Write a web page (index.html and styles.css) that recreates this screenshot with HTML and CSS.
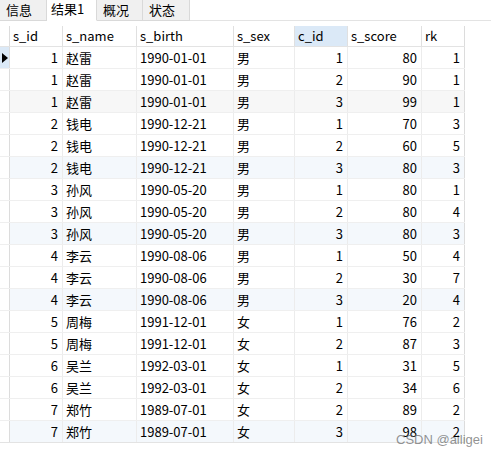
FILE: index.html
```html
<!DOCTYPE html>
<html>
<head>
<meta charset="utf-8">
<link rel="stylesheet" href="styles.css">
</head>
<body>
<div class="tabs">
  <div class="tab">信息</div>
  <div class="tab active">结果1</div>
  <div class="tab">概况</div>
  <div class="tab">状态</div>
  <div class="tab-fill"></div>
</div>
<div class="grid">
  <div class="row head">
    <div class="c ind"></div><div class="c">s_id</div><div class="c">s_name</div><div class="c">s_birth</div><div class="c">s_sex</div><div class="c sel">c_id</div><div class="c">s_score</div><div class="c">rk</div>
  </div>
  <div class="row"><div class="c ind cur"><span class="tri"></span></div><div class="c n">1</div><div class="c">赵雷</div><div class="c">1990-01-01</div><div class="c">男</div><div class="c n">1</div><div class="c n">80</div><div class="c n">1</div></div>
  <div class="row"><div class="c ind"></div><div class="c n">1</div><div class="c">赵雷</div><div class="c">1990-01-01</div><div class="c">男</div><div class="c n">2</div><div class="c n">90</div><div class="c n">1</div></div>
  <div class="row gray"><div class="c ind"></div><div class="c n">1</div><div class="c">赵雷</div><div class="c">1990-01-01</div><div class="c">男</div><div class="c n">3</div><div class="c n">99</div><div class="c n">1</div></div>
  <div class="row"><div class="c ind"></div><div class="c n">2</div><div class="c">钱电</div><div class="c">1990-12-21</div><div class="c">男</div><div class="c n">1</div><div class="c n">70</div><div class="c n">3</div></div>
  <div class="row"><div class="c ind"></div><div class="c n">2</div><div class="c">钱电</div><div class="c">1990-12-21</div><div class="c">男</div><div class="c n">2</div><div class="c n">60</div><div class="c n">5</div></div>
  <div class="row blue"><div class="c ind"></div><div class="c n">2</div><div class="c">钱电</div><div class="c">1990-12-21</div><div class="c">男</div><div class="c n">3</div><div class="c n">80</div><div class="c n">3</div></div>
  <div class="row"><div class="c ind"></div><div class="c n">3</div><div class="c">孙风</div><div class="c">1990-05-20</div><div class="c">男</div><div class="c n">1</div><div class="c n">80</div><div class="c n">1</div></div>
  <div class="row"><div class="c ind"></div><div class="c n">3</div><div class="c">孙风</div><div class="c">1990-05-20</div><div class="c">男</div><div class="c n">2</div><div class="c n">80</div><div class="c n">4</div></div>
  <div class="row blue"><div class="c ind"></div><div class="c n">3</div><div class="c">孙风</div><div class="c">1990-05-20</div><div class="c">男</div><div class="c n">3</div><div class="c n">80</div><div class="c n">3</div></div>
  <div class="row"><div class="c ind"></div><div class="c n">4</div><div class="c">李云</div><div class="c">1990-08-06</div><div class="c">男</div><div class="c n">1</div><div class="c n">50</div><div class="c n">4</div></div>
  <div class="row"><div class="c ind"></div><div class="c n">4</div><div class="c">李云</div><div class="c">1990-08-06</div><div class="c">男</div><div class="c n">2</div><div class="c n">30</div><div class="c n">7</div></div>
  <div class="row blue"><div class="c ind"></div><div class="c n">4</div><div class="c">李云</div><div class="c">1990-08-06</div><div class="c">男</div><div class="c n">3</div><div class="c n">20</div><div class="c n">4</div></div>
  <div class="row"><div class="c ind"></div><div class="c n">5</div><div class="c">周梅</div><div class="c">1991-12-01</div><div class="c">女</div><div class="c n">1</div><div class="c n">76</div><div class="c n">2</div></div>
  <div class="row"><div class="c ind"></div><div class="c n">5</div><div class="c">周梅</div><div class="c">1991-12-01</div><div class="c">女</div><div class="c n">2</div><div class="c n">87</div><div class="c n">3</div></div>
  <div class="row"><div class="c ind"></div><div class="c n">6</div><div class="c">吴兰</div><div class="c">1992-03-01</div><div class="c">女</div><div class="c n">1</div><div class="c n">31</div><div class="c n">5</div></div>
  <div class="row"><div class="c ind"></div><div class="c n">6</div><div class="c">吴兰</div><div class="c">1992-03-01</div><div class="c">女</div><div class="c n">2</div><div class="c n">34</div><div class="c n">6</div></div>
  <div class="row"><div class="c ind"></div><div class="c n">7</div><div class="c">郑竹</div><div class="c">1989-07-01</div><div class="c">女</div><div class="c n">2</div><div class="c n">89</div><div class="c n">2</div></div>
  <div class="row blue last"><div class="c ind"></div><div class="c n">7</div><div class="c">郑竹</div><div class="c">1989-07-01</div><div class="c">女</div><div class="c n">3</div><div class="c n">98</div><div class="c n">2</div></div>
</div>
<div class="watermark">CSDN @ailigei</div>
</body>
</html>
```
FILE: styles.css
```css
html, body {
  margin: 0;
  padding: 0;
  background: #ffffff;
}
body {
  width: 491px;
  height: 458px;
  overflow: hidden;
  position: relative;
  font-family: "Microsoft YaHei", "Noto Sans CJK SC", sans-serif;
  font-size: 13px;
  color: #000;
}
.tabs {
  display: flex;
  height: 21px;
  box-sizing: border-box;
}
.tab {
  box-sizing: border-box;
  height: 21px;
  background: #f0f0f0;
  border-right: 1px solid #d9d9d9;
  border-bottom: 1px solid #d9d9d9;
  padding: 0 0 0 6px;
  line-height: 20px;
  font-size: 13px;
}
.tab:nth-child(1) { width: 47px; }
.tab:nth-child(2) { width: 50px; }
.tab:nth-child(3) { width: 46px; }
.tab:nth-child(4) { width: 47px; }
.tab.active {
  background: #ffffff;
  border-bottom: 1px solid #ffffff;
  line-height: 18px;
  padding-left: 4px;
}
.tab-fill {
  flex: 1;
  border-bottom: 1px solid #e3e3e3;
}
.grid {
  margin-top: 5px;
  width: 465px;
}
.row {
  display: grid;
  grid-template-columns: 10px 53px 74px 97px 61px 53px 74px 43px;
  height: 22px;
  box-sizing: border-box;
  border-bottom: 1px solid #efefef;
}
.row.head {
  height: 21px;
  border-bottom: 1px solid #e3e3e3;
}
.row.last {
  border-bottom: 1px solid #e3e3e3;
}
.c {
  box-sizing: border-box;
  border-right: 1px solid #ececec;
  padding: 0 3px;
  line-height: 21px;
  white-space: nowrap;
  overflow: hidden;
}
.head .c {
  border-right: 1px solid #e0e0e0;
  line-height: 20px;
}
.c:last-child {
  border-right: 1px solid #dcdcdc;
}
.c.n {
  text-align: right;
  padding-right: 4px;
}
.c.ind {
  padding: 0;
  border-right: 1px solid #dcdcdc;
  background: #ffffff;
  position: relative;
}
.c.ind.cur {
  background: #dbe9f7;
}
.tri {
  position: absolute;
  left: 2px;
  top: 6px;
  width: 0;
  height: 0;
  border-top: 5px solid transparent;
  border-bottom: 5px solid transparent;
  border-left: 6px solid #000;
}
.c.sel {
  background: #dbe9f7;
}
.row.gray .c:not(.ind) {
  background: #f7f7f7;
}
.row.blue .c:not(.ind) {
  background: #f4f8fc;
}
.watermark {
  position: absolute;
  left: 396px;
  top: 432px;
  font-family: "Liberation Sans", Arial, sans-serif;
  font-size: 13px;
  color: rgba(110, 110, 110, 0.75);
}
```
